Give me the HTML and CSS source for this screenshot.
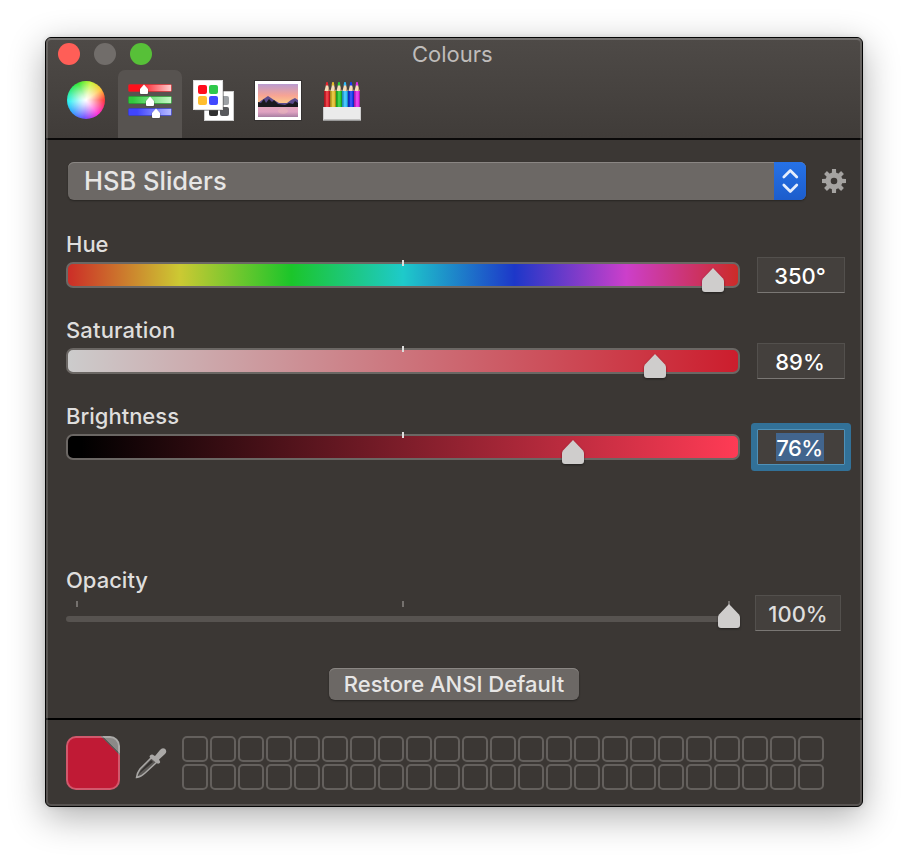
FILE: index.html
```html
<!DOCTYPE html>
<html lang="en">
<head>
<meta charset="utf-8">
<title>Colours</title>
<link rel="stylesheet" href="styles.css">
</head>
<body>
<main class="window">
  <header class="header">
    <div class="titlebar">
      <span class="light close"></span><span class="light minimise"></span><span class="light zoom"></span>
      <h1 class="title">Colours</h1>
    </div>
    <nav class="toolbar">
      <button class="tool" aria-label="Wheel"><span class="wheel"></span></button>
      <button class="tool active" aria-label="Sliders">
        <svg width="48" height="40" viewBox="0 0 48 40">
          <defs>
            <linearGradient id="r"><stop offset=".25" stop-color="#ff0f1b"/><stop offset="1" stop-color="#ffd0d0"/></linearGradient>
            <linearGradient id="g"><stop offset=".1" stop-color="#30c93f"/><stop offset="1" stop-color="#c8f8c8"/></linearGradient>
            <linearGradient id="b"><stop offset=".2" stop-color="#4045ff"/><stop offset="1" stop-color="#b8bcff"/></linearGradient>
          </defs>
          <rect x="2.500" y="3.500" width="43" height="7" rx="1" fill="url(#r)" stroke="#e02228" stroke-opacity=".6"/>
          <rect x="2.500" y="15.500" width="43" height="7" rx="1" fill="url(#g)" stroke="#1ca52a" stroke-opacity=".6"/>
          <rect x="2.500" y="27.500" width="43" height="7" rx="1" fill="url(#b)" stroke="#3137db" stroke-opacity=".6"/>
          <g fill="#444" opacity=".4"><path d="M13.500 8l4.500-4 4.500 4v6h-9zM19.500 20l4.500-4 4.500 4v6h-9zM25.500 32l4.500-4 4.500 4v6h-9z"/></g>
          <g fill="#fff"><path d="M14 8l4-4.500L22 8v4q0 1-1 1h-6q-1 0-1-1zM20 20l4-4.500 4 4.500v4q0 1-1 1h-6q-1 0-1-1zM26 32l4-4.500 4 4.500v4q0 1-1 1h-6q-1 0-1-1z"/></g>
        </svg>
      </button>
      <button class="tool" aria-label="Palettes">
        <svg width="42" height="42" viewBox="0 0 42 42">
          <rect x="11.500" y="11.500" width="29" height="29" fill="#fff" stroke="#ccc"/>
          <rect x="27" y="16" width="9" height="9" rx="2" fill="#9da1a5"/><rect x="16" y="27" width="9" height="9" rx="2" fill="#303030"/><rect x="27" y="27" width="9" height="9" rx="2" fill="#58595c"/>
          <path d="M2 2h29v29H2z" fill="#555" opacity=".5"/>
          <rect x=".5" y=".5" width="29" height="29" fill="#fff" stroke="#ddd"/>
          <rect x="5" y="5" width="9" height="9" rx="2" fill="#ff0d1d"/><rect x="16" y="5" width="9" height="9" rx="2" fill="#2fc94b"/><rect x="5" y="16" width="9" height="9" rx="2" fill="#ffbe30"/><rect x="16" y="16" width="9" height="9" rx="2" fill="#4149ff"/>
        </svg>
      </button>
      <button class="tool" aria-label="Image">
        <svg width="48" height="42" viewBox="0 0 48 42">
          <defs>
            <linearGradient id="sky" x2="0" y2="1"><stop stop-color="#ba9bd0"/><stop offset=".5" stop-color="#f7a494"/><stop offset="1" stop-color="#ffdc85"/></linearGradient>
            <linearGradient id="lake" x2="0" y2="1"><stop stop-color="#e5a7bd"/><stop offset=".5" stop-color="#dfa2c2"/><stop offset="1" stop-color="#a87fa2"/></linearGradient>
          </defs>
          <path d="M0 0h48v41H0z" fill="#343130"/><path d="M1 1h46v39H1z" fill="#fff"/>
          <path d="M4 4h40v23H4z" fill="url(#sky)"/>
          <path d="M4 23l4-3 6-4 6 4 5 3h8l4-3 4-2 3 2v7H4z" fill="#5b4b8c"/>
          <path d="M4 22l3 1 3-4 2 4 3-4 3 3 2-2 4 4 7 1 4-2 4 1 2-3 3 2v4H4z" fill="#1b1a1e"/>
          <path d="M4 27h40v10H4z" fill="url(#lake)"/><ellipse cx="29" cy="31" rx="5" ry="3" fill="#f0c4b4" opacity=".35"/>
        </svg>
      </button>
      <button class="tool" aria-label="Pencils">
        <svg width="38" height="40" viewBox="0 0 38 40">
          <defs>
            <g id="pencil"><path d="M0 9.500h6V27H0z"/><path d="M0 9.500h1.500V27H0zM5 9.500h1V27H5z" fill="#000" opacity=".25"/><path d="M2.500 10h1v17h-1z" fill="#fff" opacity=".25"/><path d="M.5 10l1.500-6h2l1.500 6z" fill="#f4dcb8"/><path d="M4 5l1.500 5H4z" fill="#c9a077"/><path d="M1.500 4.500L2.300 1h1.400l.8 3.500z"/></g>
          </defs>
          <use href="#pencil" x="1" fill="#e5252f"/><use href="#pencil" x="7" fill="#e0bd2b"/><use href="#pencil" x="13" fill="#28cc32"/><use href="#pencil" x="19" fill="#30bdfa"/><use href="#pencil" x="25" fill="#173df2"/><use href="#pencil" x="31" fill="#e32ae9"/>
          <path d="M0 26h38v14H0z" fill="#ebebeb"/><path d="M0 38.500h38V40H0z" fill="#999"/><path d="M0 26h1v13H0zM37 26h1v13h-1z" fill="#ccc"/>
        </svg>
      </button>
    </nav>
  </header>

  <section class="body">
    <div class="mode">
      <button class="popup"><span class="popup-label">HSB Sliders</span>
        <span class="stepper"><svg width="32" height="38" viewBox="0 0 32 38" fill="none" stroke="#e4edfc" stroke-width="2.700" stroke-linecap="round" stroke-linejoin="round"><path d="M9.800 15l6.500-6.500L22.800 15M9.800 23l6.500 6.500 6.500-6.500"/></svg></span>
      </button>
      <svg class="gear" width="24" height="24" viewBox="-12 -12 24 24">
        <defs><path id="tooth" d="M-2.200-7.500L-2-12H2L2.200-7.500z"/></defs>
        <g fill="#a5a3a1"><use href="#tooth"/><use href="#tooth" transform="rotate(45)"/><use href="#tooth" transform="rotate(90)"/><use href="#tooth" transform="rotate(135)"/><use href="#tooth" transform="rotate(180)"/><use href="#tooth" transform="rotate(225)"/><use href="#tooth" transform="rotate(270)"/><use href="#tooth" transform="rotate(315)"/></g>
        <circle r="5.900" fill="none" stroke="#a5a3a1" stroke-width="5.200"/>
      </svg>
    </div>

    <div class="channel">
      <div class="control"><label class="label">Hue</label>
        <div class="track hue"><i class="tick"></i><svg class="thumb" style="left:634px" width="22" height="25" viewBox="0 0 22 25"><path d="M11 0L21 10.500Q22 12 22 13.500V21q0 3-3 3H3q-3 0-3-3v-7.500Q0 12 1 10.500z"/></svg></div>
      </div>
      <output class="value">350°</output>
    </div>
    <div class="channel">
      <div class="control"><label class="label wide">Saturation</label>
        <div class="track saturation"><i class="tick"></i><svg class="thumb" style="left:576px" width="22" height="25" viewBox="0 0 22 25"><path d="M11 0L21 10.500Q22 12 22 13.500V21q0 3-3 3H3q-3 0-3-3v-7.500Q0 12 1 10.500z"/></svg></div>
      </div>
      <output class="value">89%</output>
    </div>
    <div class="channel">
      <div class="control"><label class="label">Brightness</label>
        <div class="track brightness"><i class="tick"></i><svg class="thumb" style="left:494px" width="22" height="25" viewBox="0 0 22 25"><path d="M11 0L21 10.500Q22 12 22 13.500V21q0 3-3 3H3q-3 0-3-3v-7.500Q0 12 1 10.500z"/></svg></div>
      </div>
      <output class="value focused"><span class="selection">76%</span></output>
    </div>
    <div class="channel opacity">
      <div class="control"><label class="label">Opacity</label>
        <div class="line"><i class="mark first"></i><i class="mark"></i><i class="mark last"></i><svg class="thumb" width="22" height="25" viewBox="0 0 22 25"><path d="M11 0L21 10.500Q22 12 22 13.500V21q0 3-3 3H3q-3 0-3-3v-7.500Q0 12 1 10.500z"/></svg></div>
      </div>
      <output class="value">100%</output>
    </div>
    <button class="restore"><span>Restore ANSI Default</span></button>
  </section>

  <footer class="footer">
    <div class="well"></div>
    <svg class="dropper" width="32" height="32" viewBox="0 0 32 32">
      <path d="M17 10L5 22Q2 26 1.500 30.500 6 30 10 26L22 15z" fill="#5b5855" stroke="#a9a7a5" stroke-width="1.500"/>
      <path d="M16 13L5.500 24 2.500 29.500l3-4L18 15z" fill="#34312f"/>
      <path d="M15 8.500q2-2 4 0l1 .5 5-6q2-2.500 5-1.200 2.500 2.700 0 5.200l-6 5.500.8 1.500q1 2-1 2.500-1.500.5-3-1L15.500 11q-1.500-1.500-.5-2.500z" fill="#aaa8a6"/>
    </svg>
    <div class="swatches">
      <i></i><i></i><i></i><i></i><i></i><i></i><i></i><i></i><i></i><i></i><i></i><i></i><i></i><i></i><i></i><i></i><i></i><i></i><i></i><i></i><i></i><i></i><i></i>
      <i></i><i></i><i></i><i></i><i></i><i></i><i></i><i></i><i></i><i></i><i></i><i></i><i></i><i></i><i></i><i></i><i></i><i></i><i></i><i></i><i></i><i></i><i></i>
    </div>
  </footer>
</main>
</body>
</html>
```
FILE: styles.css
```css
* { box-sizing: border-box; }
html, body { height: 100%; }
body { margin: 0; padding: 37px 45px 0; overflow: hidden; background: #fff; font-family: Inter, "Liberation Sans", sans-serif; color: #dfdedd; }
button { margin: 0; padding: 0; border: 0; color: inherit; font: inherit; background: none; }
svg { display: block; flex: none; }

.window { position: relative; display: flex; flex-direction: column; width: 818px; height: 770px; overflow: visible; border: 1px solid #050505; border-radius: 6px; background: #3b3734; box-shadow: 0 10px 36px rgba(0,0,0,.32), 0 0 5px rgba(0,0,0,.12); }
.window::after { content: ""; position: absolute; inset: 0; border: 2px solid rgba(255,255,255,.15); border-top-color: rgba(255,255,255,.22); border-radius: 5px; pointer-events: none; }

.header { height: 102px; border-bottom: 2px solid #0a0909; border-radius: 5px 5px 0 0; background: linear-gradient(#4e4a47, #403c39); }
.titlebar { display: flex; align-items: center; gap: 14px; height: 32px; padding-left: 12px; }
.light { width: 22px; height: 22px; border-radius: 50%; background: #716d6a; }
.close { background: #ff5e57; }
.zoom { background: #57c038; }
.title { margin: 0 0 0 246px; font-size: 22px; font-weight: 400; line-height: 32px; color: #bfbcba; }
.toolbar { display: flex; height: 68px; padding-left: 8px; }
.tool { display: flex; align-items: center; justify-content: center; width: 64px; height: 68px; padding-bottom: 7px; }
.active { border-radius: 7px 7px 0 0; background: #575350; }
.wheel { width: 38px; height: 38px; margin-top: -1px; border-radius: 50%; background: radial-gradient(circle, #fff 0, rgba(255,255,255,.75) 20%, rgba(255,255,255,0) 68%), conic-gradient(from 90deg, #ff3838, #ff32d8 50deg, #7050ff 95deg, #35a6ff 140deg, #2af1f1 175deg, #32ec77 215deg, #35e936 245deg, #c7f538 285deg, #ffc43a 325deg, #ff3838); }

.body { display: flex; flex-direction: column; height: 578px; padding: 22px 0 0 20px; }
.mode { display: flex; align-items: center; gap: 16px; height: 38px; padding-left: 2px; margin-bottom: 30px; }
.popup { display: flex; width: 738px; height: 38px; overflow: hidden; border-radius: 6px; background: #6c6865; box-shadow: inset 0 1px #8a8683, 0 1px 2px rgba(0,0,0,.35); text-align: left; }
.popup-label { flex: 1; padding-left: 16px; font-size: 25.5px; font-weight: 450; line-height: 38px; color: #e7e6e5; }
.stepper { background: linear-gradient(#2672e7, #1c5dcc); }

.channel { display: flex; gap: 17px; height: 86px; }
.control { width: 674px; }
.label { display: block; height: 32px; font-size: 22px; font-weight: 450; line-height: 28px; }
.wide { letter-spacing: .15px; }
.track { position: relative; height: 26px; border: 2px solid #6b6764; border-radius: 7px; }
.hue { background: linear-gradient(90deg, #cc2d27, #ccc933 16.67%, #1bc52a 33.33%, #1ecaca 50%, #1d37c9 66.67%, #cc3fca 83.33%, #cc2b28); }
.saturation { background: linear-gradient(90deg, #ccc, #cc1d2d); }
.brightness { background: linear-gradient(90deg, #000 2%, #ff3b55); }
.tick { position: absolute; left: 334px; top: -4px; width: 2px; height: 6px; background: #dedddc; }
.thumb { position: absolute; top: 4px; overflow: visible; fill: #cfcdcc; filter: drop-shadow(0 1px 1px rgba(0,0,0,.45)); }
.value { display: block; width: 88px; height: 36px; margin-top: 27px; padding-right: 2px; border: 1px solid #53504d; border-bottom: 1px solid #7a7774; background: #44403d; font-size: 22px; font-weight: 550; line-height: 37px; text-align: center; color: #fff; }
.focused { padding-right: 3px; box-shadow: 0 0 0 6px #327198; border-color: #4f91b8; border-radius: 1px; }
.selection { display: inline-block; width: 48px; height: 28px; line-height: 30px; letter-spacing: -.5px; background: #42658d; }
.opacity { height: 100px; margin-top: 78px; gap: 15px; }
.line { position: relative; height: 6px; margin-top: 18px; border-radius: 3px; background: #575350; }
.mark { position: absolute; left: 336px; top: -15px; width: 2px; height: 6px; background: #75716e; }
.first { left: 10px; }
.last { left: 662px; }
.line .thumb { left: 652px; top: -12px; }
.opacity .value { width: 86px; margin-top: 29px; padding-right: 0; font-weight: 450; color: #dfdedd; }
.restore { width: 250px; height: 32px; margin: 2px 0 0 263px; border-radius: 6px; background: #6c6865; box-shadow: inset 0 1px #8a8683, 0 1px 2px rgba(0,0,0,.4); font-size: 22px; font-weight: 450; line-height: 32px; color: #e7e6e5; white-space: nowrap; }

.footer { display: flex; height: 88px; padding: 16px 0 0 20px; border-top: 2px solid #000; }
.well { width: 54px; height: 54px; border: 2px solid rgba(255,255,255,.28); border-radius: 10px; background: linear-gradient(45deg, #c01a35 82%, #5e5a58 82%, #5e5a58 84%, #8b8987 84%) border-box; }
.dropper { margin: 11px 15px 0; }
.swatches { display: grid; grid-template-columns: repeat(23, 26px); grid-auto-rows: 26px; gap: 2px; }
.swatches i { border: 2px solid #64605d; border-radius: 5px; }
```
